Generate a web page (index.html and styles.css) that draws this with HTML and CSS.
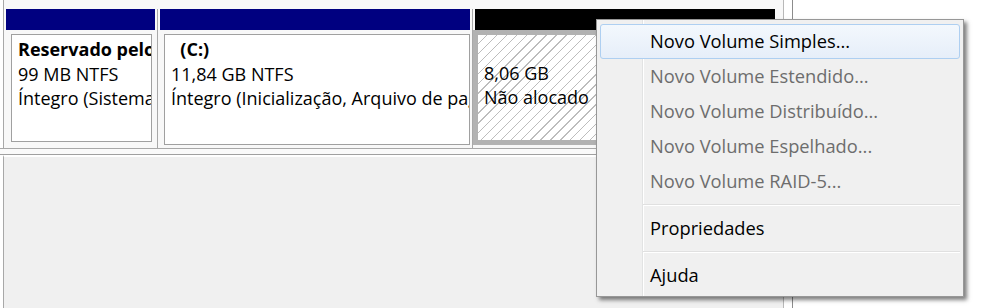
FILE: index.html
```html
<!DOCTYPE html>
<html lang="pt-BR">
<head>
<meta charset="utf-8">
<title>Gerenciamento de disco</title>
<link rel="stylesheet" href="styles.css">
</head>
<body>
<div class="screen">
  <div class="frame">
    <div class="disk-area">
      <div class="part p1">
        <div class="hdr navy"></div>
        <div class="body">
          <div class="line"><b>Reservado pelo Sistema</b></div>
          <div class="line">99 MB NTFS</div>
          <div class="line">Íntegro (Sistema, Ativo, Partição Primária)</div>
        </div>
      </div>
      <div class="part p2">
        <div class="hdr navy"></div>
        <div class="body">
          <div class="line"><b>&nbsp;&nbsp;(C:)</b></div>
          <div class="line">11,84 GB NTFS</div>
          <div class="line">Íntegro (Inicialização, Arquivo de paginação, Despejo de memória, Partição Primária)</div>
        </div>
      </div>
      <div class="part p3">
        <div class="hdr black"></div>
        <div class="body hatched">
          <div class="line">&nbsp;</div>
          <div class="line">8,06 GB</div>
          <div class="line">Não alocado</div>
        </div>
      </div>
    </div>
    <div class="rule"></div>
    <div class="lower"></div>
  </div>

  <div class="menu">
    <div class="item hot">Novo Volume Simples...</div>
    <div class="item off">Novo Volume Estendido...</div>
    <div class="item off">Novo Volume Distribuído...</div>
    <div class="item off">Novo Volume Espelhado...</div>
    <div class="item off">Novo Volume RAID-5...</div>
    <div class="sep"></div>
    <div class="item">Propriedades</div>
    <div class="sep"></div>
    <div class="item">Ajuda</div>
  </div>
</div>
</body>
</html>
```

FILE: styles.css
```css
* { box-sizing: border-box; }

html, body {
  margin: 0;
  padding: 0;
  background: #ffffff;
}

.screen {
  position: relative;
  width: 984px;
  height: 308px;
  overflow: hidden;
  font-family: "Open Sans", "Noto Sans", sans-serif;
  color: #000;
}

.frame {
  width: 793px;
  height: 308px;
  display: flex;
  flex-direction: column;
  border-right: 1px solid #8c8c8c;
  background: #ffffff;
}

.disk-area {
  height: 148px;
  margin-left: 3px;
  width: 781px;
  border-left: 1px solid #a8a8a8;
  border-right: 1px solid #b8b8b8;
  background: #f8f8f8;
  padding: 9px 0 0 2px;
  display: flex;
  align-items: stretch;
}

.part {
  display: flex;
  flex-direction: column;
  overflow: hidden;
  font-size: 18px;
  line-height: 24.5px;
}

.p1 {
  width: 152px;
  padding-right: 2px;
  border-right: 1px solid #a8a8a8;
  margin-right: 2px;
}
.p1 .hdr { width: 149px; }
.p1 .body { margin: 4px 3px 0 5px; height: 108px; }

.p2 {
  width: 313px;
  padding-right: 2px;
  border-right: 1px solid #a8a8a8;
  margin-right: 0;
}
.p2 .hdr { width: 310px; }
.p2 .body { margin: 4px 0 0 4px; height: 111px; }

.p3 {
  flex: 1;
}
.p3 .hdr { width: 300px; margin-left: 2px; }

.hdr {
  height: 21px;
  flex: none;
}
.navy { background: #000080; }
.black { background: #000000; }

.body {
  background: #ffffff;
  border: 1px solid #a0a0a0;
  padding: 2px 0 0 6px;
  white-space: nowrap;
  overflow: hidden;
}

.body.hatched {
  margin: 0;
  height: 115px;
  width: 300px;
  border: 5px solid #b2b2b2;
  padding: 1px 0 0 6px;
  background-color: #ffffff;
  background-image: repeating-linear-gradient(135deg, #ffffff 0px, #ffffff 6px, #bdbdbd 6px, #bdbdbd 7px);
}

.line { height: 24.5px; }
.line b { font-weight: 700; }

.rule {
  height: 7px;
  border-top: 1px solid #a8a8a8;
  border-bottom: 1px solid #a0a0a0;
  background: #fafafa;
}

.lower {
  flex: 1;
  margin-left: 3px;
  width: 781px;
  border-left: 1px solid #a8a8a8;
  border-right: 1px solid #b8b8b8;
  border-top: 2px solid #ffffff;
  background: #f0f0f0;
}

/* context menu overlay */
.menu {
  position: absolute;
  left: 596px;
  top: 19px;
  width: 368px;
  height: 278px;
  background: #f0f0f0;
  border: 1px solid #979797;
  box-shadow: 3px 3px 4px rgba(0, 0, 0, 0.5);
  padding: 4px 3px 0 3px;
  font-size: 18.3px;
  background-image: linear-gradient(to right, transparent 45px, #e2e3e3 45px, #e2e3e3 46px, #ffffff 46px, #ffffff 47px, transparent 47px);
}

.item {
  height: 35px;
  line-height: 31px;
  padding-left: 49px;
  border: 1px solid transparent;
  border-radius: 3px;
  white-space: nowrap;
}

.item.hot {
  background: linear-gradient(to bottom, #f3f8fd, #e6eef9);
  border-color: #aecff1;
}

.item.off { color: #6d6d6d; }

.sep {
  height: 12px;
  margin-left: 43px;
  background: linear-gradient(to bottom, transparent 5px, #e0e0e0 5px, #e0e0e0 6px, #ffffff 6px, #ffffff 7px, transparent 7px);
}
```
